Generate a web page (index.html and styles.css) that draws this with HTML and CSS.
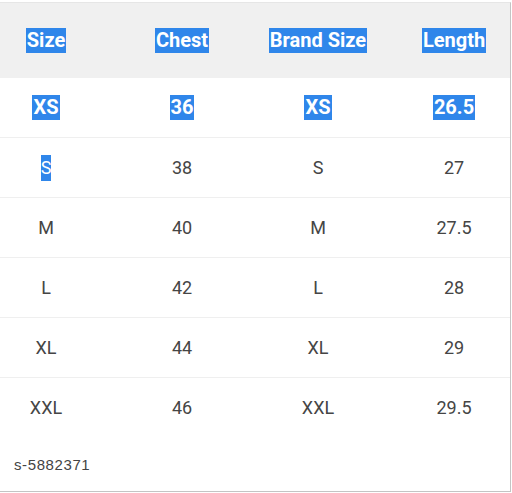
FILE: index.html
```html
<!DOCTYPE html>
<html>
<head>
<meta charset="utf-8">
<link rel="stylesheet" href="styles.css">
</head>
<body>
<div class="frame">
  <div class="row head">
    <div class="cell"><span class="sel">Size</span></div>
    <div class="cell"><span class="sel">Chest</span></div>
    <div class="cell"><span class="sel">Brand Size</span></div>
    <div class="cell"><span class="sel">Length</span></div>
  </div>
  <div class="row">
    <div class="cell"><span class="sel">XS</span></div>
    <div class="cell"><span class="sel">36</span></div>
    <div class="cell"><span class="sel">XS</span></div>
    <div class="cell"><span class="sel">26.5</span></div>
  </div>
  <div class="row">
    <div class="cell"><span class="sel thin">S</span></div>
    <div class="cell">38</div>
    <div class="cell">S</div>
    <div class="cell">27</div>
  </div>
  <div class="row">
    <div class="cell">M</div>
    <div class="cell">40</div>
    <div class="cell">M</div>
    <div class="cell">27.5</div>
  </div>
  <div class="row">
    <div class="cell">L</div>
    <div class="cell">42</div>
    <div class="cell">L</div>
    <div class="cell">28</div>
  </div>
  <div class="row">
    <div class="cell">XL</div>
    <div class="cell">44</div>
    <div class="cell">XL</div>
    <div class="cell">29</div>
  </div>
  <div class="row last">
    <div class="cell">XXL</div>
    <div class="cell">46</div>
    <div class="cell">XXL</div>
    <div class="cell">29.5</div>
  </div>
  <div class="sku">s-5882371</div>
</div>
</body>
</html>
```

FILE: styles.css
```css
html, body {
  margin: 0;
  padding: 0;
  background: #ffffff;
}
body {
  width: 512px;
  height: 493px;
  overflow: hidden;
}
.frame {
  margin-top: 2px;
  margin-left: -2px;
  width: 511px;
  height: 488px;
  border: 1px solid #c4c4c4;
  border-top-color: #e6e6e6;
  overflow: hidden;
}
.row {
  display: grid;
  grid-template-columns: repeat(4, 136px);
  margin-left: -21px;
  padding-right: 21px;
  height: 59px;
  border-bottom: 1px solid #efefef;
  font-family: Roboto, "Liberation Sans", sans-serif;
  font-size: 18px;
  color: #454545;
}
.head {
  height: 75px;
  background: #f0f0f0;
  border-bottom: none;
}
.cell {
  display: flex;
  align-items: center;
  justify-content: center;
}
.sel {
  display: inline-block;
  background: #2f86ea;
  color: #ffffff;
  font-weight: 700;
  font-size: 20px;
  line-height: 25px;
  padding: 0 1px;
}
.sel.thin {
  font-weight: 400;
  font-size: 18px;
  line-height: 26px;
  padding: 0;
}
.last {
  border-bottom: none;
}
.sku {
  margin-top: 19px;
  margin-left: 15px;
  font-family: "Liberation Sans", Arial, sans-serif;
  font-size: 15px;
  letter-spacing: 0.6px;
  color: #444444;
}
```
